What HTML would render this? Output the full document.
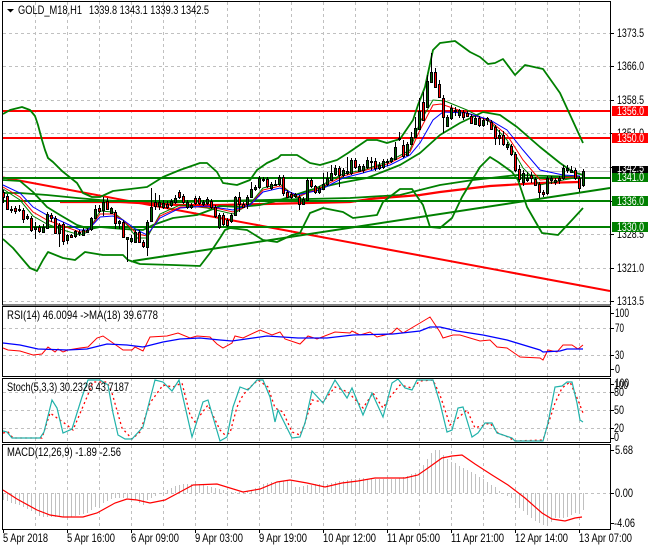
<!DOCTYPE html>
<html><head><meta charset="utf-8"><style>
html,body{margin:0;padding:0;background:#fff}
svg{display:block}
text{font-family:"Liberation Sans",sans-serif;font-size:12px;fill:#000}
</style></head><body>
<svg width="650" height="550" viewBox="0 0 650 550" xmlns="http://www.w3.org/2000/svg">
<rect width="650" height="550" fill="#fff"/>
<!-- grid -->
<g fill="none" stroke="#c0c0c0" stroke-width="1" stroke-dasharray="3 3" shape-rendering="crispEdges">
<path d="M35.5 2V305M67.5 2V305M99.5 2V305M131.5 2V305M163.5 2V305M195.5 2V305M227.5 2V305M259.5 2V305M291.5 2V305M323.5 2V305M355.5 2V305M387.5 2V305M419.5 2V305M451.5 2V305M483.5 2V305M515.5 2V305M547.5 2V305M579.5 2V305"/>
<path d="M3 33.5H610M3 66.5H610M3 100.5H610M3 133.5H610M3 167.5H610M3 201.5H610M3 234.5H610M3 268.5H610M3 301.5H610"/>
<path d="M35.5 307V376M67.5 307V376M99.5 307V376M131.5 307V376M163.5 307V376M195.5 307V376M227.5 307V376M259.5 307V376M291.5 307V376M323.5 307V376M355.5 307V376M387.5 307V376M419.5 307V376M451.5 307V376M483.5 307V376M515.5 307V376M547.5 307V376M579.5 307V376"/>
<path d="M3 328.5H610M3 355.5H610"/>
<path d="M35.5 378V442M67.5 378V442M99.5 378V442M131.5 378V442M163.5 378V442M195.5 378V442M227.5 378V442M259.5 378V442M291.5 378V442M323.5 378V442M355.5 378V442M387.5 378V442M419.5 378V442M451.5 378V442M483.5 378V442M515.5 378V442M547.5 378V442M579.5 378V442"/>
<path d="M3 392.5H610M3 410.5H610M3 428.5H610"/>
<path d="M35.5 445V529M67.5 445V529M99.5 445V529M131.5 445V529M163.5 445V529M195.5 445V529M227.5 445V529M259.5 445V529M291.5 445V529M323.5 445V529M355.5 445V529M387.5 445V529M419.5 445V529M451.5 445V529M483.5 445V529M515.5 445V529M547.5 445V529M579.5 445V529"/>
<path d="M3 493.5H610"/>
</g>
<path d="M3 171.5H610" stroke="#c0c0c0" stroke-width="1" shape-rendering="crispEdges"/>

<!-- long MAs and trendlines -->
<g fill="none" stroke-linejoin="round">
<polyline stroke="#008000" stroke-width="1.8" points="3,193 20,193 47,195 77,198 100,200 150,203 220,201 350,198 400,195 440,185 473,180 517,175 580,177"/>
<polyline stroke="#ff0000" stroke-width="2.2" points="60,202 120,202 180,205 220,205 350,202 370,199 420,195 440,192 490,186 540,183 580,182"/>
<path d="M3 177.5L610 291" stroke="#ff0000" stroke-width="2"/>
<path d="M133 261L610 188" stroke="#008000" stroke-width="2"/>
</g>
<g shape-rendering="crispEdges">
<rect x="3" y="110" width="607" height="2" fill="#ff0000"/>
<rect x="3" y="137" width="607" height="2" fill="#ff0000"/>
<rect x="3" y="177" width="607" height="2" fill="#008000"/>
<rect x="3" y="200" width="607" height="2" fill="#008000"/>
<rect x="3" y="226" width="607" height="2" fill="#008000"/>
</g>

<!-- Bollinger -->
<g fill="none" stroke="#008000" stroke-width="1.8" stroke-linejoin="round">
<polyline points="3,114 10,110 22,107 30,110 35,116 38,125 42,140 45,150 48,158 53,162 62,171 77,183 83,193 92,197 100,197 113,191 147,187 163,177 180,170 200,163 207,163 217,172 223,183 237,185 250,180 257,170 267,163 278,158 281,155 297,155 310,163 320,165 337,160 348,153 367,140 377,140 387,143 400,139 413,120 418,105 425,87 433,50 440,43 455,41 470,52 480,57 488,64 495,63 503,59 515,75 525,65 543,69 560,93 583,143"/>
<polyline points="3,180 20,181 33,192 47,207 60,215 77,225 90,229 100,227 123,229 143,230 153,225 173,218 197,215 213,209 220,206 240,207 260,205 280,200 310,190 340,183 367,178 400,165 420,153 440,135 460,123 483,112 500,115 517,127 540,147 560,163 573,172 583,175"/>
<polyline points="3,239 13,248 30,268 37,271 43,260 48,252 63,258 75,260 85,252 103,255 123,255 128,260 140,264 173,265 200,266 210,253 220,238 225,230 230,228 247,230 263,240 277,242 292,235 300,233 310,213 323,208 343,212 353,218 377,215 383,202 400,189 412,189 423,205 430,227 440,228 452,218 462,197 480,167 490,157 498,162 512,172 518,180 527,207 542,233 558,235 572,220 583,208"/>
</g>
<!-- short MAs -->
<g fill="none" stroke-width="1">
<polyline stroke="#008000" points="3,189 20,200 33,216 47,224 63,230 80,235 88,232 100,211 113,212 123,220 137,238 147,238 160,214 180,205 207,208 220,211 233,214 250,204 263,188 280,184 297,198 320,186 343,174 363,170 390,161 410,150 420,122 433,100 445,101 467,110 490,122 507,140 523,168 540,185 563,180 580,177"/>
<polyline stroke="#ff0000" points="3,187 20,197 33,212 47,220 63,226 80,232 88,231 100,214 113,214 123,220 137,234 147,236 160,216 180,207 207,207 220,209 233,212 250,205 263,190 280,186 297,197 320,188 343,176 363,171 390,163 410,152 420,130 433,105 441,104 467,113 490,121 507,135 523,160 540,180 563,178 580,176"/>
<polyline stroke="#0000ff" points="3,185 20,193 33,207 47,215 63,222 80,230 88,230 100,217 113,216 123,220 137,230 147,235 160,218 180,208 207,206 220,208 233,210 250,205 263,192 280,188 297,195 320,190 343,178 363,173 390,165 410,155 420,143 433,120 443,112 467,113 490,120 507,130 523,150 540,170 563,175 580,176"/>
</g>

<!-- candles: wicks -->
<path shape-rendering="crispEdges" stroke="#000" stroke-width="1" fill="none" d="M3.5 190V203M7.5 194V210M11.5 206V213M15.5 206V214M19.5 205V212M23.5 208V223M27.5 214V220M31.5 216V232M35.5 222V239M39.5 225V233M43.5 224V233M47.5 212V229M51.5 213V222M55.5 216V234M59.5 223V247M63.5 222V245M67.5 234V244M71.5 234V238M75.5 230V238M79.5 230V236M83.5 228V236M87.5 228V233M91.5 217V231M95.5 205V219M99.5 205V213M103.5 197V216M107.5 198V210M111.5 207V214M115.5 210V229M119.5 220V229M123.5 220V238M127.5 237V262M131.5 235V243M135.5 230V243M139.5 230V243M143.5 240V248M147.5 220V256M151.5 188V222M155.5 193V210M159.5 195V210M163.5 200V209M167.5 201V209M171.5 199V207M175.5 195V204M179.5 190V199M183.5 194V204M187.5 200V209M191.5 203V209M195.5 196V205M199.5 196V205M203.5 200V206M207.5 197V205M211.5 199V209M215.5 205V218M219.5 213V229M223.5 213V226M227.5 218V227M231.5 213V223M235.5 196V216M239.5 192V212M243.5 202V208M247.5 195V209M251.5 182V198M255.5 185V191M259.5 176V189M263.5 177V182M267.5 177V188M271.5 182V190M275.5 180V186M279.5 175V186M283.5 175V196M287.5 190V198M291.5 192V199M295.5 193V198M299.5 195V210M303.5 197V205M307.5 178V201M311.5 178V188M315.5 185V194M319.5 186V194M323.5 173V190M327.5 172V186M331.5 165V181M335.5 165V176M339.5 166V187M343.5 168V177M347.5 157V175M351.5 158V175M355.5 158V169M359.5 164V172M363.5 164V173M367.5 157V169M371.5 157V170M375.5 158V171M379.5 162V170M383.5 159V169M387.5 159V166M391.5 157V163M395.5 142V160M399.5 132V141M403.5 140V158M407.5 142V156M411.5 132V145M415.5 117V138M419.5 98V130M423.5 92V121M427.5 75V108M431.5 53V83M435.5 68V88M439.5 80V98M443.5 95V133M447.5 115V127M451.5 105V120M455.5 107V116M459.5 109V118M463.5 110V120M467.5 111V117M471.5 114V124M475.5 116V125M479.5 116V127M483.5 118V127M487.5 117V125M491.5 120V130M495.5 125V145M499.5 130V145M503.5 131V146M507.5 142V150M511.5 144V156M515.5 152V172M519.5 165V182M523.5 170V186M527.5 172V182M531.5 172V183M535.5 177V186M539.5 182V198M543.5 190V197M547.5 176V195M551.5 176V184M555.5 178V185M559.5 176V184M563.5 165V180M567.5 165V173M571.5 166V172M575.5 168V180M579.5 176V192M583.5 169V187"/>
<!-- bodies red -->
<path shape-rendering="crispEdges" fill="#ff0000" stroke="#000" stroke-width="1" d="M2.5 192.5h2v5h-2zM6.5 196.5h2v13h-2zM14.5 208.5h2v3h-2zM22.5 210.5h2v9h-2zM30.5 218.5h2v12h-2zM38.5 227.5h2v4h-2zM50.5 215.5h2v3h-2zM54.5 218.5h2v15h-2zM62.5 224.5h2v17h-2zM70.5 235.5h2v2h-2zM98.5 208.5h2v3h-2zM106.5 201.5h2v8h-2zM114.5 212.5h2v11h-2zM122.5 222.5h2v15h-2zM138.5 232.5h2v10h-2zM142.5 242.5h2v4h-2zM154.5 202.5h2v4h-2zM166.5 204.5h2v3h-2zM178.5 192.5h2v5h-2zM182.5 196.5h2v6h-2zM194.5 198.5h2v5h-2zM198.5 198.5h2v5h-2zM210.5 201.5h2v6h-2zM214.5 207.5h2v9h-2zM222.5 215.5h2v9h-2zM226.5 220.5h2v5h-2zM238.5 197.5h2v7h-2zM242.5 204.5h2v3h-2zM266.5 179.5h2v7h-2zM282.5 177.5h2v16h-2zM286.5 192.5h2v5h-2zM290.5 194.5h2v3h-2zM298.5 197.5h2v7h-2zM310.5 180.5h2v6h-2zM314.5 186.5h2v6h-2zM338.5 168.5h2v7h-2zM354.5 160.5h2v7h-2zM374.5 161.5h2v7h-2zM402.5 145.5h2v11h-2zM422.5 102.5h2v18h-2zM434.5 72.5h2v15h-2zM438.5 84.5h2v13h-2zM442.5 98.5h2v19h-2zM462.5 112.5h2v5h-2zM466.5 113.5h2v3h-2zM470.5 116.5h2v7h-2zM478.5 118.5h2v7h-2zM490.5 122.5h2v7h-2zM494.5 127.5h2v11h-2zM502.5 135.5h2v9h-2zM510.5 146.5h2v8h-2zM514.5 154.5h2v16h-2zM518.5 169.5h2v10h-2zM530.5 175.5h2v3h-2zM534.5 179.5h2v6h-2zM538.5 184.5h2v8h-2zM542.5 192.5h2v2h-2zM574.5 170.5h2v8h-2zM578.5 178.5h2v10h-2z"/>
<!-- bodies green -->
<path shape-rendering="crispEdges" fill="#006400" stroke="#000" stroke-width="1" d="M10.5 209.5h2v1h-2zM18.5 209.5h2v1h-2zM26.5 216.5h2v2h-2zM34.5 227.5h2v2h-2zM42.5 227.5h2v5h-2zM46.5 214.5h2v14h-2zM58.5 225.5h2v8h-2zM66.5 235.5h2v5h-2zM74.5 231.5h2v5h-2zM78.5 232.5h2v1h-2zM82.5 230.5h2v5h-2zM86.5 230.5h2v2h-2zM90.5 218.5h2v11h-2zM94.5 209.5h2v9h-2zM102.5 202.5h2v8h-2zM110.5 208.5h2v5h-2zM118.5 221.5h2v2h-2zM126.5 237.5h2v2h-2zM130.5 238.5h2v3h-2zM134.5 232.5h2v10h-2zM146.5 222.5h2v25h-2zM150.5 207.5h2v14h-2zM158.5 202.5h2v4h-2zM162.5 203.5h2v4h-2zM170.5 201.5h2v4h-2zM174.5 198.5h2v4h-2zM186.5 202.5h2v5h-2zM190.5 205.5h2v2h-2zM202.5 202.5h2v2h-2zM206.5 199.5h2v4h-2zM218.5 215.5h2v12h-2zM230.5 215.5h2v6h-2zM234.5 197.5h2v18h-2zM246.5 197.5h2v7h-2zM250.5 189.5h2v8h-2zM254.5 187.5h2v2h-2zM258.5 178.5h2v9h-2zM262.5 179.5h2v1h-2zM270.5 184.5h2v4h-2zM274.5 184.5h2v1h-2zM278.5 177.5h2v7h-2zM294.5 194.5h2v2h-2zM302.5 199.5h2v5h-2zM306.5 180.5h2v20h-2zM318.5 188.5h2v4h-2zM322.5 184.5h2v5h-2zM326.5 178.5h2v6h-2zM330.5 173.5h2v7h-2zM334.5 168.5h2v6h-2zM342.5 170.5h2v5h-2zM346.5 171.5h2v2h-2zM350.5 160.5h2v13h-2zM358.5 166.5h2v5h-2zM362.5 166.5h2v4h-2zM366.5 160.5h2v7h-2zM370.5 161.5h2v1h-2zM378.5 165.5h2v3h-2zM382.5 161.5h2v6h-2zM386.5 161.5h2v1h-2zM390.5 158.5h2v3h-2zM394.5 147.5h2v12h-2zM398.5 138.5h2v1h-2zM406.5 144.5h2v11h-2zM410.5 137.5h2v7h-2zM414.5 128.5h2v9h-2zM418.5 111.5h2v18h-2zM426.5 81.5h2v26h-2zM430.5 72.5h2v10h-2zM446.5 117.5h2v9h-2zM450.5 108.5h2v10h-2zM454.5 110.5h2v1h-2zM458.5 110.5h2v5h-2zM474.5 118.5h2v6h-2zM482.5 120.5h2v5h-2zM486.5 118.5h2v2h-2zM498.5 135.5h2v3h-2zM506.5 144.5h2v3h-2zM522.5 173.5h2v9h-2zM526.5 178.5h2v2h-2zM546.5 178.5h2v15h-2zM550.5 178.5h2v2h-2zM554.5 180.5h2v2h-2zM558.5 178.5h2v2h-2zM562.5 168.5h2v10h-2zM566.5 168.5h2v2h-2zM570.5 170.5h2v2h-2zM582.5 171.5h2v14h-2z"/>

<!-- RSI -->
<polyline fill="none" stroke="#ff0000" points="3,348 8,350 20,351 33,355 42,354 48,347 55,352 58,349 63,352 68,350 80,348 88,347 97,338 103,336 113,343 123,350 132,350 135,347 143,351 150,337 167,336 178,333 190,338 197,336 210,337 217,344 223,348 232,343 235,336 243,338 260,330 272,335 280,332 285,339 300,344 308,336 317,339 335,332 350,333 352,331 360,335 370,332 377,337 392,333 397,328 403,333 420,323 430,317 440,332 443,338 453,335 460,335 470,338 480,341 490,340 497,347 507,348 520,357 540,358 543,360 548,350 557,352 563,345 572,345 578,349 583,345"/>
<polyline fill="none" stroke="#0000ff" stroke-width="1.3" points="3,343 20,345 38,349 67,350 87,349 107,344 127,345 143,347 163,342 180,339 200,338 220,340 232,341 253,338 267,336 298,338 327,338 353,335 393,334 420,331 430,327 440,327 457,331 483,335 507,340 540,350 543,352 560,351 567,349 583,349"/>

<!-- Stoch -->
<polyline fill="none" stroke="#ff0000" stroke-width="1.3" stroke-dasharray="2 3" points="3,433 8,432 13,438 42,438 50,413 67,425 73,430 87,397 93,382 107,382 112,393 122,428 132,439 140,432 150,403 163,385 173,387 182,383 190,415 195,422 208,405 220,430 225,435 230,433 237,407 242,397 247,390 258,380 268,387 275,408 283,412 292,432 300,435 305,423 312,400 323,402 335,387 348,392 363,408 373,393 383,408 390,397 400,385 412,388 420,381 433,380 440,395 450,425 467,410 475,428 490,423 498,433 508,437 515,441 543,440 555,403 562,388 570,382 578,400 583,413"/>
<polyline fill="none" stroke="#20b2aa" stroke-width="1.2" points="3,431 7,432 12,438 40,438 44,432 52,400 57,408 63,433 72,429 82,397 88,380 100,380 108,385 113,413 118,435 125,439 132,439 143,427 148,407 155,380 163,382 172,391 179,380 192,437 203,402 208,400 220,441 227,437 233,407 240,387 248,390 257,380 263,380 270,397 275,422 278,410 292,438 300,437 305,423 312,391 323,403 335,380 347,398 352,388 363,415 372,393 383,417 392,383 398,379 405,388 412,390 417,380 433,380 440,403 447,432 452,430 458,408 463,407 472,437 478,433 485,423 492,423 497,433 512,438 515,441 543,441 548,423 555,387 562,386 567,382 572,382 577,403 580,420 583,422"/>

<!-- MACD histogram -->
<path shape-rendering="crispEdges" stroke="#c0c0c0" stroke-width="1" fill="none" d="M3.5 493V500M7.5 493V501M11.5 493V503M15.5 493V504M19.5 493V505M23.5 493V507M27.5 493V509M31.5 493V511M35.5 493V514M39.5 493V516M43.5 493V517M47.5 493V517M51.5 493V517M55.5 493V517M59.5 493V517M63.5 493V517M67.5 493V517M71.5 493V517M75.5 493V516M79.5 493V515M83.5 493V514M87.5 493V513M91.5 493V510M95.5 493V507M99.5 493V505M103.5 493V503M107.5 493V501M111.5 493V499M115.5 493V498M119.5 493V498M123.5 493V498M127.5 493V498M131.5 493V499M135.5 493V500M139.5 493V503M143.5 493V505M147.5 493V500M151.5 493V498M155.5 493V496M159.5 493V494M163.5 493V492M167.5 493V490M171.5 493V488M175.5 493V486M179.5 493V485M183.5 493V484M187.5 493V484M191.5 493V484M195.5 493V484M199.5 493V484M203.5 493V485M207.5 493V486M211.5 493V487M215.5 493V488M219.5 493V489M223.5 493V490M227.5 493V491M231.5 493V492M235.5 493V492M239.5 493V492M243.5 493V492M247.5 493V491M251.5 493V490M255.5 493V488M259.5 493V486M263.5 493V484M267.5 493V483M271.5 493V482M275.5 493V482M279.5 493V481M283.5 493V481M287.5 493V481M291.5 493V482M295.5 493V487M299.5 493V487M303.5 493V486M307.5 493V485M311.5 493V485M315.5 493V484M319.5 493V484M323.5 493V484M327.5 493V484M331.5 493V483M335.5 493V482M339.5 493V481M343.5 493V481M347.5 493V480M351.5 493V479M355.5 493V479M359.5 493V478M363.5 493V478M367.5 493V479M371.5 493V479M375.5 493V479M379.5 493V479M383.5 493V479M387.5 493V479M391.5 493V479M395.5 493V479M399.5 493V478M403.5 493V477M407.5 493V476M411.5 493V474M415.5 493V473M419.5 493V470M423.5 493V465M427.5 493V459M431.5 493V453M435.5 493V450M439.5 493V450M443.5 493V455M447.5 493V459M451.5 493V462M455.5 493V463M459.5 493V466M463.5 493V468M467.5 493V470M471.5 493V472M475.5 493V474M479.5 493V477M483.5 493V479M487.5 493V482M491.5 493V485M495.5 493V487M499.5 493V491M503.5 493V494M507.5 493V496M511.5 493V498M515.5 493V503M519.5 493V508M523.5 493V511M527.5 493V515M531.5 493V518M535.5 493V521M539.5 493V523M543.5 493V525M547.5 493V525M551.5 493V522M555.5 493V518M559.5 493V518M563.5 493V518M567.5 493V517M571.5 493V515M575.5 493V513M579.5 493V512M583.5 493V510"/>
<polyline fill="none" stroke="#ff0000" stroke-width="1.2" points="3,490 17,499 37,510 50,515 63,517 83,517 97,513 115,503 127,499 137,500 150,503 165,500 180,492 193,485 217,484 243,492 260,489 277,482 290,480 307,483 325,487 342,483 358,481 375,478 405,478 418,475 428,468 442,458 452,456 462,455 475,464 492,475 508,485 525,498 542,513 552,519 565,521 575,518 582,517"/>

<!-- frames -->
<g fill="none" stroke="#000" stroke-width="1" shape-rendering="crispEdges">
<path d="M2.5 1.5H610.5V305H2.5Z"/>
<path d="M2.5 306.5H610.5V376.5H2.5Z"/>
<path d="M2.5 378.5H610.5V442.5H2.5Z"/>
<path d="M2.5 444.5H610.5V529.5H2.5Z"/>
<path d="M611 33.5h3M611 66.5h3M611 100.5h3M611 133.5h3M611 167.5h3M611 201.5h3M611 234.5h3M611 268.5h3M611 301.5h3M611 313.5h3M611 328.5h3M611 355.5h3M611 369.5h3M611 384.5h3M611 392.5h3M611 410.5h3M611 428.5h3M611 438.5h3M611 450.5h3M611 493.5h3M611 523.5h3"/>
<path d="M3.5 530v3M67.5 530v3M131.5 530v3M195.5 530v3M259.5 530v3M323.5 530v3M387.5 530v3M451.5 530v3M515.5 530v3M579.5 530v3"/>
</g>
<path d="M7 9h7l-3.5 3.5z" fill="#000"/>

<!-- labels -->
<text x="18" y="14" textLength="64" lengthAdjust="spacingAndGlyphs">GOLD_M18,H1</text>
<text x="89" y="14" textLength="120" lengthAdjust="spacingAndGlyphs">1339.8 1343.1 1339.3 1342.5</text>
<text x="7" y="319" textLength="151" lengthAdjust="spacingAndGlyphs">RSI(14) 46.0094  -&gt;MA(18) 39.6778</text>
<text x="7" y="391" textLength="122" lengthAdjust="spacingAndGlyphs">Stoch(5,3,3) 30.2326 43.7187</text>
<text x="7" y="456" textLength="114" lengthAdjust="spacingAndGlyphs">MACD(12,26,9) -1.89 -2.56</text>

<g>
<text x="617" y="37" textLength="27" lengthAdjust="spacingAndGlyphs">1373.5</text>
<text x="617" y="70" textLength="27" lengthAdjust="spacingAndGlyphs">1366.0</text>
<text x="617" y="104" textLength="27" lengthAdjust="spacingAndGlyphs">1358.5</text>
<text x="617" y="137" textLength="27" lengthAdjust="spacingAndGlyphs">1351.0</text>
<text x="617" y="238" textLength="27" lengthAdjust="spacingAndGlyphs">1328.5</text>
<text x="617" y="272" textLength="27" lengthAdjust="spacingAndGlyphs">1321.0</text>
<text x="617" y="305" textLength="27" lengthAdjust="spacingAndGlyphs">1313.5</text>
<text x="615" y="317" textLength="14" lengthAdjust="spacingAndGlyphs">100</text>
<text x="615" y="332" textLength="9" lengthAdjust="spacingAndGlyphs">70</text>
<text x="615" y="359" textLength="9" lengthAdjust="spacingAndGlyphs">30</text>
<text x="615" y="373" textLength="5" lengthAdjust="spacingAndGlyphs">0</text>
<text x="615" y="387" textLength="14" lengthAdjust="spacingAndGlyphs">100</text>
<text x="614" y="389" textLength="14" lengthAdjust="spacingAndGlyphs">100</text>
<text x="614" y="396" textLength="10" lengthAdjust="spacingAndGlyphs">80</text>
<text x="614" y="414" textLength="10" lengthAdjust="spacingAndGlyphs">50</text>
<text x="614" y="432" textLength="10" lengthAdjust="spacingAndGlyphs">20</text>
<text x="614" y="441" textLength="5" lengthAdjust="spacingAndGlyphs">0</text>
<text x="615" y="454" textLength="18" lengthAdjust="spacingAndGlyphs">5.68</text>
<text x="615" y="497" textLength="18" lengthAdjust="spacingAndGlyphs">0.00</text>
<text x="614" y="527" textLength="21" lengthAdjust="spacingAndGlyphs">-4.06</text>
</g>

<g shape-rendering="crispEdges">
<rect x="612" y="106" width="36" height="10" fill="#ff0000"/>
<rect x="612" y="133" width="36" height="10" fill="#ff0000"/>
<rect x="612" y="166" width="36" height="7" fill="#000"/>
<rect x="612" y="173" width="36" height="9" fill="#008000"/>
<rect x="612" y="196" width="36" height="10" fill="#008000"/>
<rect x="612" y="222" width="36" height="10" fill="#008000"/>
</g>
<g>
<text x="617" y="172" textLength="27" lengthAdjust="spacingAndGlyphs" style="fill:#fff">1342.5</text>
<text x="617" y="115" textLength="27" lengthAdjust="spacingAndGlyphs" style="fill:#fff">1356.0</text>
<text x="617" y="142" textLength="27" lengthAdjust="spacingAndGlyphs" style="fill:#fff">1350.0</text>
<text x="617" y="181" textLength="27" lengthAdjust="spacingAndGlyphs" style="fill:#fff">1341.0</text>
<text x="617" y="205" textLength="27" lengthAdjust="spacingAndGlyphs" style="fill:#fff">1336.0</text>
<text x="617" y="231" textLength="27" lengthAdjust="spacingAndGlyphs" style="fill:#fff">1330.0</text>
</g>

<g>
<text x="3" y="542" textLength="45" lengthAdjust="spacingAndGlyphs">5 Apr 2018</text>
<text x="67" y="542" textLength="48" lengthAdjust="spacingAndGlyphs">5 Apr 16:00</text>
<text x="131" y="542" textLength="48" lengthAdjust="spacingAndGlyphs">6 Apr 09:00</text>
<text x="195" y="542" textLength="48" lengthAdjust="spacingAndGlyphs">9 Apr 03:00</text>
<text x="259" y="542" textLength="48" lengthAdjust="spacingAndGlyphs">9 Apr 19:00</text>
<text x="323" y="542" textLength="53" lengthAdjust="spacingAndGlyphs">10 Apr 12:00</text>
<text x="387" y="542" textLength="53" lengthAdjust="spacingAndGlyphs">11 Apr 05:00</text>
<text x="451" y="542" textLength="53" lengthAdjust="spacingAndGlyphs">11 Apr 21:00</text>
<text x="515" y="542" textLength="53" lengthAdjust="spacingAndGlyphs">12 Apr 14:00</text>
<text x="579" y="542" textLength="53" lengthAdjust="spacingAndGlyphs">13 Apr 07:00</text>
</g>
</svg>
</body></html>
